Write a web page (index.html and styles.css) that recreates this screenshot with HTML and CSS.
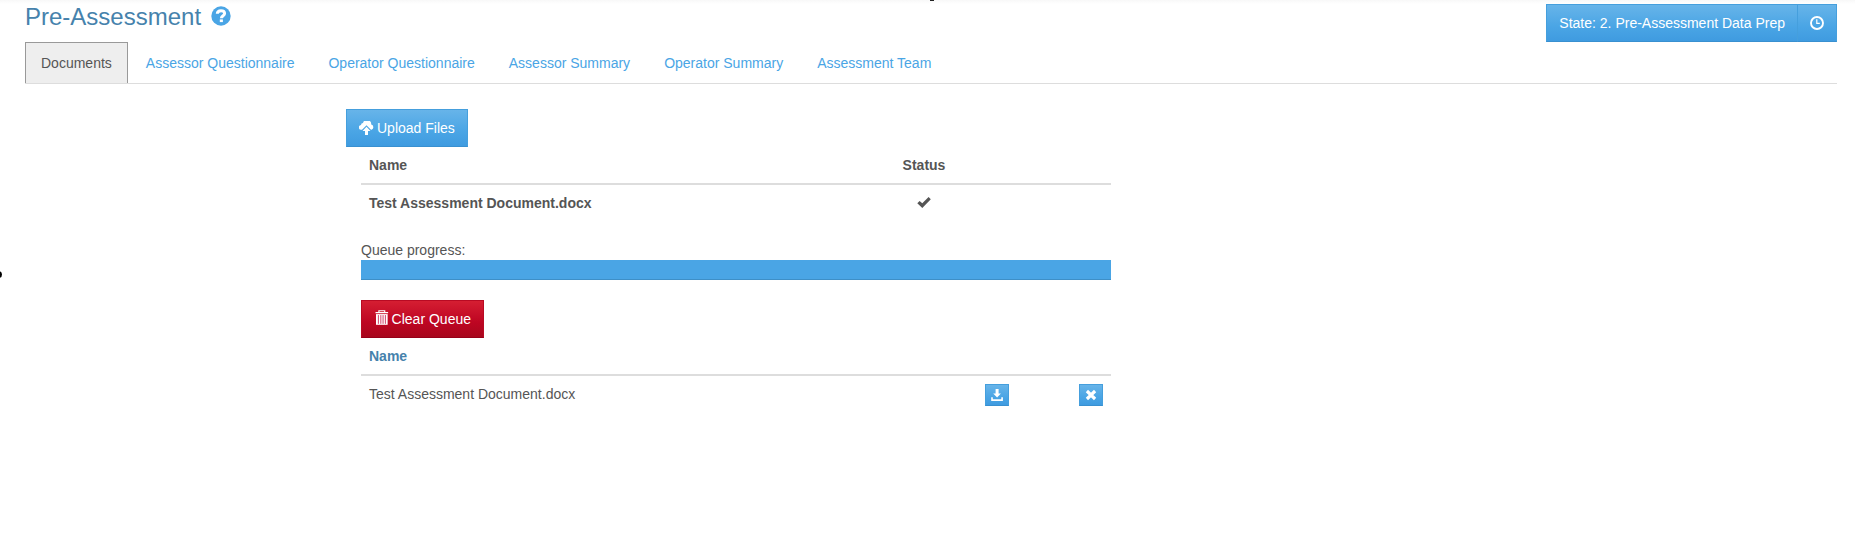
FILE: index.html
```html
<!DOCTYPE html>
<html lang="en">
<head>
<meta charset="utf-8">
<title>Pre-Assessment</title>
<link rel="stylesheet" href="styles.css">
</head>
<body>
<span class="fragment fragment-top"></span>
<span class="fragment fragment-left"></span>
<main class="page">
  <header class="page-header">
    <h1 class="title">Pre-Assessment
      <svg class="help" viewBox="0 0 20 20"><circle cx="10" cy="10" r="9.7" fill="#4aa5e5"/><path d="M6.3 7.8C6.4 5.6 7.9 4.7 10 4.7c2.2 0 3.6 1.1 3.6 2.8 0 2.3-3.2 2.2-3.2 4.8" fill="none" stroke="#fff" stroke-width="3"/><path d="M8.8 13.4h3.1v2.7H8.8z" fill="#fff"/></svg>
    </h1>
    <div class="btn-group">
      <button class="btn btn-primary">State: 2. Pre-Assessment Data Prep</button>
      <button class="btn btn-primary" aria-label="History"><svg class="icon" viewBox="0 0 14 14" fill="none" stroke="#fff"><circle cx="7" cy="7" r="6" stroke-width="1.9"/><path d="M6.8 3.2v4.2h3" stroke-width="1.2"/></svg></button>
    </div>
  </header>
  <nav class="tabs">
    <a class="tab active">Documents</a>
    <a class="tab">Assessor Questionnaire</a>
    <a class="tab">Operator Questionnaire</a>
    <a class="tab">Assessor Summary</a>
    <a class="tab">Operator Summary</a>
    <a class="tab">Assessment Team</a>
  </nav>
  <section class="documents">
    <button class="btn btn-primary upload"><svg class="icon cloud" viewBox="0 0 15 14" fill="#fff"><path d="M3 8.8H2.5A2.4 2.4 0 0 1 2 4 2.1 2.1 0 0 1 4 2 4.2 4.2 0 0 1 12.2 3.6 2.7 2.7 0 0 1 12.5 8.8H12L7.5 4.3z"/><path d="M7.5 5.8l4 4.1H9V14H6V9.9H3.5z"/></svg>Upload Files</button>
    <div class="queue">
      <div class="row row-head queue-row"><span>Name</span><span class="status">Status</span></div>
      <div class="row queue-row queued"><span>Test Assessment Document.docx</span><span class="status"><svg class="icon" viewBox="0 0 14 14"><path d="M.3 7.2l2.3-2.3 2.7 2.4 6.3-6.2 2.2 2.2-8.5 8.6z" fill="#555"/></svg></span></div>
      <div class="progress-label">Queue progress:</div>
      <div class="progress"></div>
      <button class="btn btn-danger"><svg class="icon trash" viewBox="0 0 14 16"><path d="M4 2.5v-2h6v2M.5 2.5h13" fill="none" stroke="#fff" stroke-width="1.2"/><path d="M1 4h12v11H1z" fill="#fff"/><path d="M3.5 5v9M6 5v9M8.3 5v9M10.7 5v9" stroke="#cf3f64"/></svg>Clear Queue</button>
      <div class="row row-head file-head">Name</div>
      <div class="row file-row">
        <span>Test Assessment Document.docx</span>
        <button class="btn btn-primary btn-xs" aria-label="Download"><svg class="icon-xs" viewBox="0 0 12 12" fill="#fff"><path d="M4.6 0h3v4.5h2.3L6.1 8.4 2.2 4.5h2.4z"/><path d="M.2 8.2h1.6v2h8.5v-2h1.6V12H.2z"/></svg></button>
        <button class="btn btn-primary btn-xs" aria-label="Delete"><svg class="icon-xs" viewBox="0 0 12 12"><path d="M1.9 2l8.2 8M10.1 2L1.9 10" stroke="#fff" stroke-width="3.2"/></svg></button>
      </div>
    </div>
  </section>
</main>
</body>
</html>
```
FILE: styles.css
```css
* { box-sizing: border-box; }
body {
  margin: 0;
  height: 540px;
  overflow: hidden;
  background: linear-gradient(#f8f8f8, #fff 4px) no-repeat #fff;
  color: #555;
  font: 14px/20px "Liberation Sans", Arial, sans-serif;
}
.fragment { position: absolute; background: #222; }
.fragment-top { left: 930px; top: 0; width: 4px; height: 1px; }
.fragment-left { left: -5px; top: 271px; width: 7px; height: 7px; border-radius: 50%; background: #000; }
.page { padding: 4px 18px 0 25px; }
.page-header { display: flex; justify-content: space-between; height: 38px; }
.title {
  display: flex;
  align-items: center;
  gap: 10px;
  margin: 0;
  height: 26px;
  color: #4682ac;
  font-size: 24px;
  font-weight: 400;
}
.help { width: 20px; height: 20px; margin-bottom: 3px; }
.btn {
  display: inline-flex;
  align-items: center;
  padding: 8px 12px;
  border: 1px solid;
  color: #fff;
  font: inherit;
  white-space: nowrap;
}
.btn-primary {
  background: linear-gradient(#67b4e9, #4aa5e5 60%, #3f9be0);
  border-color: #459fdd #459fdd #3990d0;
}
.btn-danger {
  background: linear-gradient(#d51e32, #bd0522 60%, #a8071d);
  border-color: #b90a23 #b90a23 #970019;
}
.btn-group { display: flex; }
.btn-group .btn + .btn { margin-left: -1px; }
.icon { width: 14px; height: 14px; display: block; }
.icon.cloud { width: 15px; margin: 0 3px 0 0; }
.icon.trash { height: 16px; margin: -3px 3px 0 1px; }
.icon-xs { width: 12px; height: 12px; display: block; }
.tabs { display: flex; gap: 2px; height: 42px; border-bottom: 1px solid #ddd; }
.tab { height: 41px; padding: 10px 15px; border: 1px solid transparent; border-bottom: 0; color: #4aa5e5; white-space: nowrap; }
.tab.active { background: #eee; border-color: #999; color: #555; }
.documents { margin: 25px 0 0 321px; }
.upload { display: flex; height: 38px; }
.queue { width: 750px; margin-left: 15px; }
.row { padding: 8px; }
.row-head { height: 38px; border-bottom: 2px solid #ddd; font-weight: 700; }
.queue-row { display: grid; grid-template-columns: 1fr 358px; }
.queue-row .status { display: flex; justify-content: center; align-items: center; }
.queued { font-weight: 700; margin-bottom: 20px; }
.queued.row { height: 36px; }
.progress-label { margin-top: -1px; }
.progress { height: 20px; margin-bottom: 20px; background: #4aa5e5; border-bottom: 1px solid #3e8fc7; }
.btn-danger { display: flex; height: 38px; width: 123px; }
.file-head { color: #4682ac; }
.file-row { display: flex; align-items: flex-start; gap: 70px; }
.file-row span { flex: 1; }
.btn-xs { padding: 1px 5px; width: 24px; height: 22px; }
```
